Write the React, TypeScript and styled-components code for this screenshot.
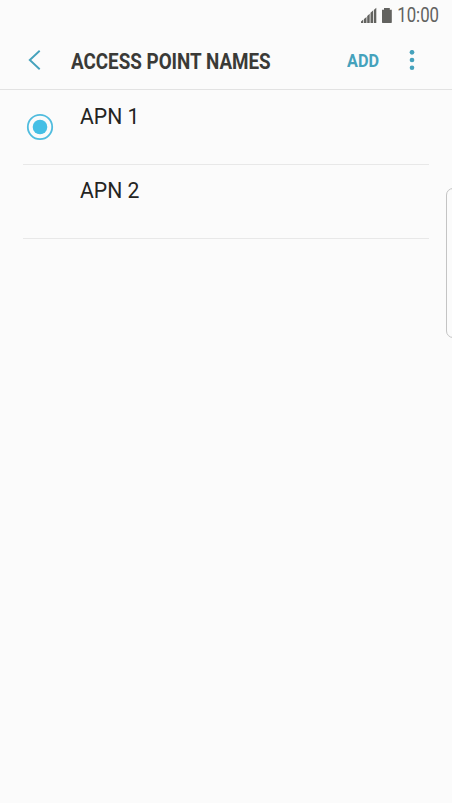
import React from "react";
import styled, { createGlobalStyle } from "styled-components";

const Global = createGlobalStyle`
  * { box-sizing: border-box; }
  body { margin: 0; background: #fbfbfb; font-family: Roboto, "Liberation Sans", sans-serif; }
`;
const Screen = styled.main`
  position: relative;
  height: 803px;
  overflow: hidden;
  background: #fbfbfb;
`;
const StatusBar = styled.div`
  height: 31px;
  display: flex;
  align-items: center;
  justify-content: flex-end;
  padding-right: 13px;
  color: #62625f;
`;
const Clock = styled.time`
  font-size: 19.5px;
  line-height: 22px;
  transform: scaleX(0.86);
  transform-origin: right;
  width: 42px;
  display: flex;
  justify-content: flex-end;
`;
const Toolbar = styled.header`
  height: 59px;
  display: flex;
  align-items: center;
  border-bottom: 1px solid #e2e2e2;
`;
const Back = styled.button`
  width: 70.5px;
  height: 58px;
  padding: 0 0 0 27px;
  border: 0;
  background: none;
  display: flex;
  align-items: center;
`;
const Title = styled.h1`
  margin: 4px 0 0;
  width: 276.5px;
  white-space: nowrap;
  font-size: 22px;
  line-height: 26px;
  font-weight: 700;
  color: #3a3a37;
  transform: scaleX(0.855);
  transform-origin: left;
`;
const Add = styled.button`
  margin-top: 2px;
  padding: 0;
  border: 0;
  background: none;
  width: 61.5px;
  text-align: left;
  font: 700 19px/22px Roboto, sans-serif;
  color: #45a2bc;
  transform: scaleX(0.855);
  transform-origin: left;
`;
const List = styled.ul`
  list-style: none;
  margin: 0;
  padding: 1px 23px 0;
`;
const Row = styled.li`
  height: 74px;
  display: flex;
  border-bottom: 1px solid #e8e8e8;
`;
const RadioSlot = styled.span`
  width: 57px;
  padding: 22px 0 0 3px;
`;
const Label = styled.span`
  padding-top: 13px;
  font-size: 22px;
  line-height: 26px;
  color: #242422;
  transform: scaleX(0.962);
  transform-origin: left;
`;
const EdgeHandle = styled.div`
  position: absolute;
  top: 188px;
  right: -8px;
  width: 14px;
  height: 150px;
  border: 1px solid #c4c4c4;
  border-radius: 8px;
`;

export default function App() {
  return (
    <Screen>
      <Global />
      <StatusBar>
        <svg width="36" height="20" viewBox="361 5 36 20" fill="#62625f">
          <path d="M361 22v-1.6l2.3-2V22zM364 22v-4l2.5-2v6zM367.2 22v-7l2.5-2.3V22zM370.5 22V11.7l2.5-2.2V22zM373.8 22V8.9l2.5-2.2V22z" />
          <path d="M382 21.5V8.8h2V7h5.8v1.8h2v12.7l-.5.5h-8.8z" />
        </svg>
        <Clock>10:00</Clock>
      </StatusBar>
      <Toolbar>
        <Back aria-label="Back">
          <svg width="14" height="20" viewBox="0 0 14 20" fill="none" stroke="#45a2bc" strokeWidth="1.9"><path d="M12.7 .8L2.8 10l9.9 9.2" /></svg>
        </Back>
        <Title>ACCESS POINT NAMES</Title>
        <Add>ADD</Add>
        <svg width="6" height="20" viewBox="0 0 6 20" fill="#45a2bc"><circle cx="3" cy="2.3" r="2.35" /><circle cx="3" cy="10" r="2.35" /><circle cx="3" cy="17.7" r="2.3" /></svg>
      </Toolbar>
      <List>
        {["APN 1", "APN 2"].map((name, i) => (
          <Row key={name}>
            <RadioSlot>
              {i === 0 && <svg width="28" height="28" viewBox="0 0 28 28"><circle cx="14" cy="14" r="12.2" fill="none" stroke="#50bcde" strokeWidth="1.8" /><circle cx="14" cy="14" r="7.3" fill="#45bfe5" /></svg>}
            </RadioSlot>
            <Label>{name}</Label>
          </Row>
        ))}
      </List>
      <EdgeHandle />
    </Screen>
  );
}
